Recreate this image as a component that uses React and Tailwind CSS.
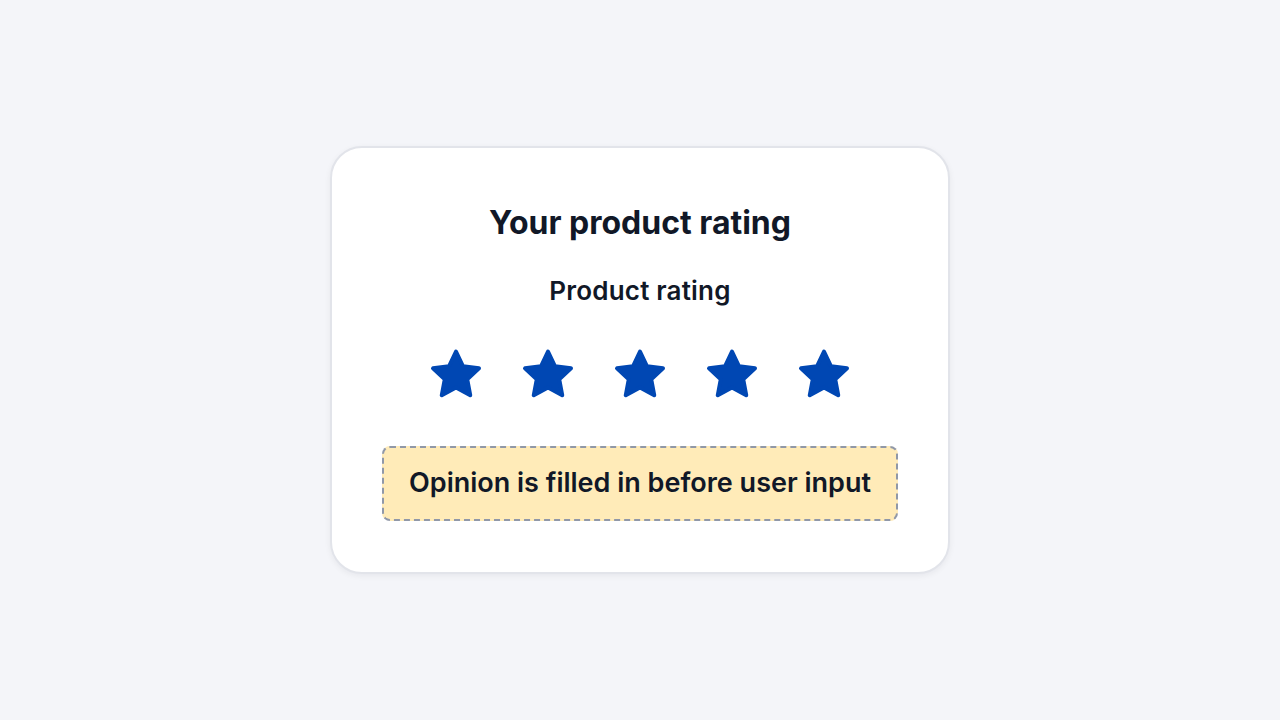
function Star() {
  return (
    <svg width="60" height="60" viewBox="0 0 24 24" className="text-[#0047b3]">
      <path
        d="M12 2.6l2.8 5.9 6.4.8-4.7 4.4 1.2 6.4L12 17l-5.7 3.1 1.2-6.4-4.7-4.4 6.4-.8z"
        fill="currentColor"
        stroke="currentColor"
        strokeWidth="1.6"
        strokeLinejoin="round"
      />
    </svg>
  );
}

export default function App() {
  return (
    <div className="min-h-screen w-full bg-[#f4f5f9] flex items-center justify-center font-['Inter',sans-serif]">
      <div className="w-[620px] bg-white border-2 border-[#e2e4ea] rounded-[32px] shadow-[0_2px_6px_rgba(15,23,42,0.06)] px-[50px] pt-[56px] pb-[51px] flex flex-col items-center">
        <h1 className="text-[32px] leading-[38px] font-bold text-[#111827]">Your product rating</h1>
        <h2 className="mt-[33px] text-[26px] leading-[32px] font-semibold tracking-[0.2px] text-[#111827]">Product rating</h2>
        <div className="mt-[38px] flex items-center gap-[32px]">
          {[0, 1, 2, 3, 4].map((i) => (
            <Star key={i} />
          ))}
        </div>
        <div className="mt-[41px] w-full h-[75px] bg-[#ffebb8] border-2 border-dashed border-[#9098a8] rounded-[8px] flex items-center justify-center">
          <span className="text-[27px] font-semibold text-[#111827]">Opinion is filled in before user input</span>
        </div>
      </div>
    </div>
  );
}
